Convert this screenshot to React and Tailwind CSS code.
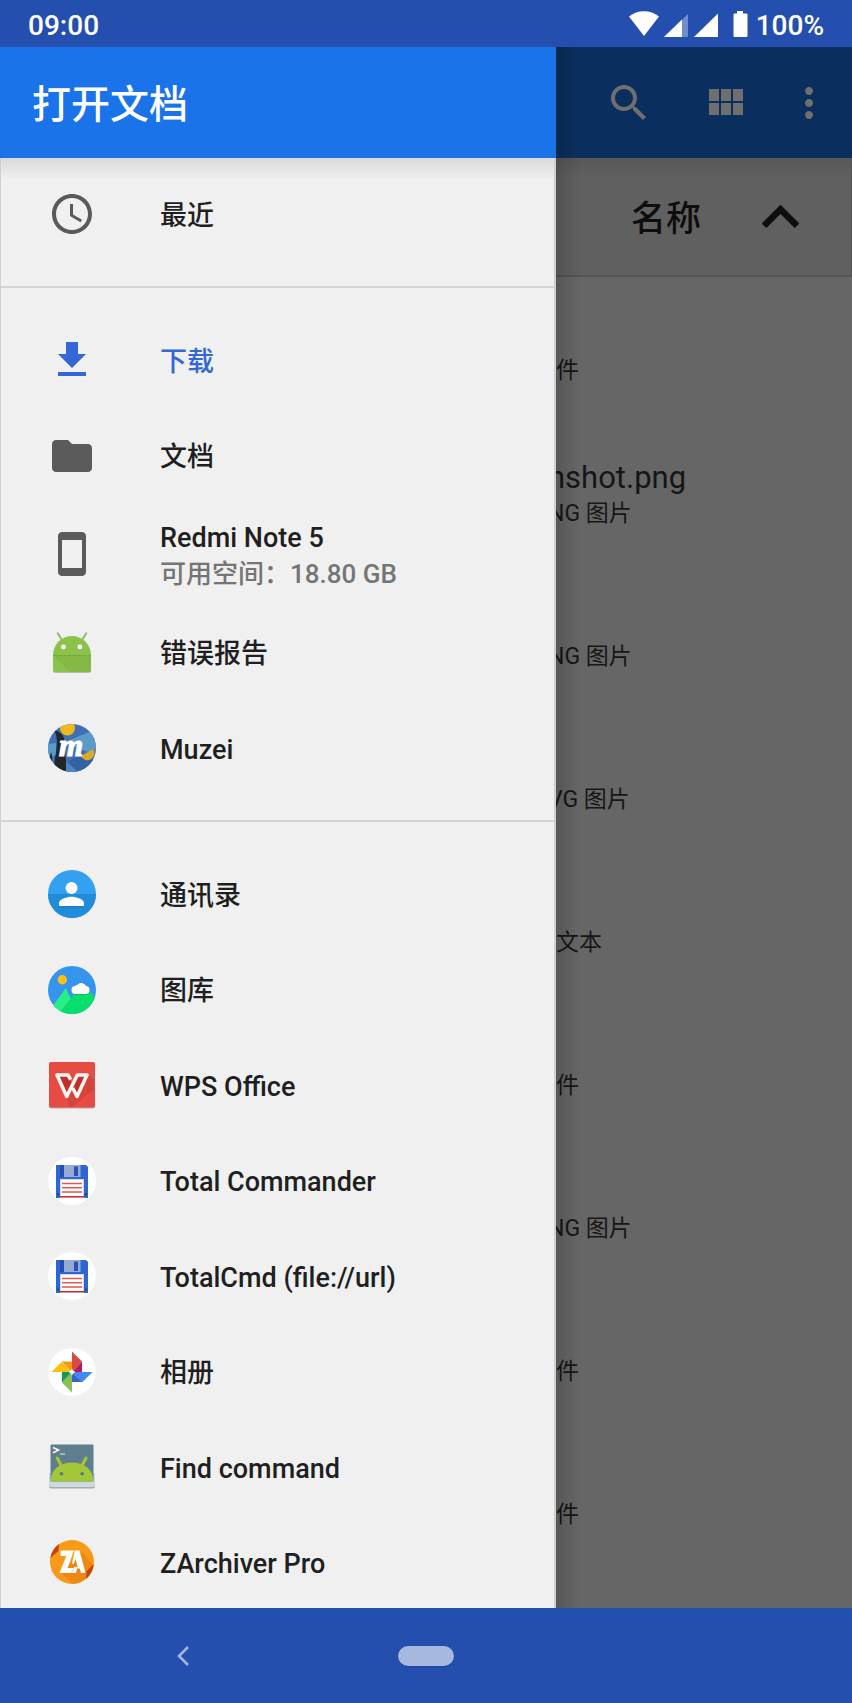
const FONT = "font-[Roboto,'Noto_Sans_CJK_SC',sans-serif]";

function Glyph({ d }) {
  return (
    <svg viewBox="0 0 24 24" className="size-12 shrink-0" fill="currentColor" aria-hidden="true">
      <path d={d} />
    </svg>
  );
}

function Art({ children }) {
  return (
    <svg viewBox="0 0 48 48" className="size-12 shrink-0" aria-hidden="true">
      {children}
    </svg>
  );
}

const SEARCH =
  "M15.5 14h-.79l-.28-.27A6.471 6.471 0 0 0 16 9.5 6.5 6.5 0 1 0 9.5 16c1.61 0 3.09-.59 4.23-1.57l.27.28v.79l5 4.99L20.49 19l-4.99-5zm-6 0C7.01 14 5 11.99 5 9.5S7.01 5 9.5 5 14 7.01 14 9.5 11.99 14 9.5 14z";
const MODULES =
  "M4 11h5V5H4v6zm0 7h5v-6H4v6zm6 0h5v-6h-5v6zm6 0h5v-6h-5v6zm-6-7h5V5h-5v6zm6-6v6h5V5h-5z";
const MORE =
  "M12 8c1.1 0 2-.9 2-2s-.9-2-2-2-2 .9-2 2 .9 2 2 2zm0 2c-1.1 0-2 .9-2 2s.9 2 2 2 2-.9 2-2-.9-2-2-2zm0 6c-1.1 0-2 .9-2 2s.9 2 2 2 2-.9 2-2-.9-2-2-2z";
const CLOCK =
  "M11.99 2C6.47 2 2 6.48 2 12s4.47 10 9.99 10C17.52 22 22 17.52 22 12S17.52 2 11.99 2zM12 20c-4.42 0-8-3.58-8-8s3.58-8 8-8 8 3.58 8 8-3.58 8-8 8zm.5-13H11v6l5.25 3.15.75-1.23-4.5-2.67z";
const DOWNLOAD = "M19 9h-4V3H9v6H5l7 7 7-7zM5 18v2h14v-2H5z";
const FOLDER = "M10 4H4c-1.1 0-1.99.9-1.99 2L2 18c0 1.1.9 2 2 2h16c1.1 0 2-.9 2-2V8c0-1.1-.9-2-2-2h-8l-2-2z";
const PHONE =
  "M17 1.01L7 1c-1.1 0-2 .9-2 2v18c0 1.1.9 2 2 2h10c1.1 0 2-.9 2-2V3c0-1.1-.9-1.99-2-1.99zM17 19H7V5h10v14z";

function BugIcon() {
  return (
    <Art>
      <path d="M9.7 4.3l4.2 6.6M38.3 4.3l-4.2 6.6" stroke="#8bb85a" strokeWidth="1.8" strokeLinecap="round" />
      <path d="M5 42a2 2 0 0 0 2 2h34a2 2 0 0 0 2-2v-3H5z" fill="#b9bdb4" />
      <path d="M5 26a19 19 0 0 1 38 0v15a2 2 0 0 1-2 2H7a2 2 0 0 1-2-2z" fill="#8bc34a" />
      <path d="M5 26h38v15a2 2 0 0 1-2 2H22z" fill="#83b845" />
      <path d="M5 26h38v1H5z" fill="#78aa3f" />
      <circle cx="15.5" cy="18" r="2.4" fill="#fff" />
      <circle cx="31.9" cy="18" r="2.4" fill="#fff" />
    </Art>
  );
}

function MuzeiIcon() {
  return (
    <Art>
      <clipPath id="muzei-disc">
        <circle cx="24" cy="24" r="24" />
      </clipPath>
      <g clipPath="url(#muzei-disc)">
        <path d="M0 0h48v48H0z" fill="#3f70b5" />
        <path d="M0 20l8-1v12L0 34zM22 16L48 5v20l-8 3-14-5z" fill="#5a9bc9" />
        <path d="M17 40l12-8 19 4v12H17z" fill="#3461a2" />
        <path d="M18 37l12 11H18z" fill="#4d86c6" />
        <circle cx="19.500" cy="4" r="7.500" fill="#f0b81c" />
        <path d="M33 32l12-7a7 7 0 1 1-12 7z" fill="#d9ab22" />
        <path d="M6 6c4 6 3 16 2 22-1 7-2 9-2 20h12V37c-1-8-1-16-2-23C14 9 10 7 6 6zM3 28c2 4 0 9 1 14l-4-2z" fill="#20282c" />
      </g>
      <text x="11" y="32" fill="#fff" stroke="#fff" strokeWidth="1.200" fontSize="31" fontWeight="700" fontStyle="italic" fontFamily="Liberation Serif, serif">
        m
      </text>
    </Art>
  );
}

function ContactsIcon() {
  return (
    <Art>
      <circle cx="24" cy="24" r="24" fill="#34a0f2" />
      <path d="M0 24h48a24 24 0 0 1-48 0z" fill="#218cda" />
      <path d="M11 36.500h25v1H11z" fill="#1b78bd" />
      <circle cx="23.500" cy="18" r="6" fill="#fff" />
      <path d="M11 36v-3c0-4 8-6.300 12.500-6.300S36 29 36 33v3z" fill="#fff" />
    </Art>
  );
}

function GalleryIcon() {
  return (
    <Art>
      <clipPath id="gallery-disc">
        <circle cx="24" cy="24" r="24" />
      </clipPath>
      <g clipPath="url(#gallery-disc)">
        <path d="M0 0h48v48H0z" fill="#3594ec" />
        <circle cx="14.300" cy="13.700" r="4.700" fill="#fcc016" />
        <path d="M2 44l15.700-22L30 48H2z" fill="#28ef85" />
        <path d="M13 45l13-17 15-4 9 12v12H13z" fill="#08de6b" />
        <path d="M27 27.800h13v1H27z" fill="#0bb65d" />
        <path d="M28 28a4 4 0 0 1-1-8 4 4 0 0 1 3-1.500 5 5 0 0 1 8 1.500 4 4 0 0 1-1 8z" fill="#fff" />
      </g>
    </Art>
  );
}

function WpsIcon() {
  return (
    <Art>
      <rect x="1" y="1.500" width="46" height="46" rx="2" fill="#b9aaa8" />
      <rect x="1" y="1" width="46" height="45.500" rx="2" fill="#e64c41" />
      <path d="M40 13l6 6v9L31 40l-7 6h-2l-5-11z" fill="#d3443a" />
      <path d="M11 15h9l4 8-5 10zM29 15l-5 9 5 10 9-19z" fill="#bf3128" />
      <path
        d="M22.700 18.700L20 14H9l9.700 21.500L29.300 14H39L29 35.500l-4.300-8.500"
        fill="none"
        stroke="#fbf3f2"
        strokeWidth="3.600"
        strokeLinejoin="round"
      />
    </Art>
  );
}

function FloppyIcon() {
  return (
    <Art>
      <circle cx="24" cy="24" r="24" fill="#fff" />
      <path d="M8 8h30l2 2v31H8z" fill="#2f66cf" />
      <path d="M12 8h4v12h-4z" fill="#234fb4" />
      <path d="M16 8h16.500v12H16z" fill="#97aad4" />
      <path d="M26 9.500h4V19h-4z" fill="#2853b6" />
      <path d="M12 22h24v19H12z" fill="#cdd7ef" />
      <path d="M13 23h22v17H13z" fill="#fff" />
      <path d="M14 26.500h20M14 30.700h20M14 35h20" stroke="#e2574c" strokeWidth="1.400" />
      <path d="M12 39.700h24" stroke="#ea1c1c" strokeWidth="1.400" />
      <path d="M9 36.500h2v2H9zM37 36.500h2v2h-2z" fill="#1b3f94" />
    </Art>
  );
}

function PinwheelIcon() {
  return (
    <Art>
      <circle cx="24" cy="24" r="24" fill="#fff" />
      <path d="M24 3.500l10 10L24 24z" fill="#db4a3f" />
      <path d="M34 13.500V24H24z" fill="#b01f5c" />
      <path d="M44.500 24l-10 10L24 24z" fill="#4387f2" />
      <path d="M34.500 34H24V24z" fill="#3566d2" />
      <path d="M24 44.500l-10-10L24 24z" fill="#8bc152" />
      <path d="M14 34.500V24h10z" fill="#139b5b" />
      <path d="M3.500 24l10-10L24 24z" fill="#fdc012" />
      <path d="M13.500 13.500H24V24z" fill="#f69914" />
      <path d="M24 20.500l1.200 2.300L27.500 24l-2.300 1.200L24 27.500l-1.200-2.300L20.500 24l2.300-1.200z" fill="#fff" />
    </Art>
  );
}

function TerminalIcon() {
  return (
    <Art>
      <rect x="1" y="30" width="46" height="15.500" rx="2" fill="#9fb0b5" />
      <rect x="1" y="30" width="46" height="14" rx="2" fill="#cfd8dc" />
      <rect x="2.500" y="1.500" width="43" height="37" rx="1" fill="#5f7f8e" />
      <path d="M9.200 15l4 7.500M38 15l-4 7.500" stroke="#a4c639" strokeWidth="3" strokeLinecap="round" />
      <path d="M3 38.500V36a21 16.500 0 0 1 42 0v2.500z" fill="#a4c639" />
      <circle cx="13.500" cy="30.700" r="1.800" fill="#54788a" />
      <circle cx="34.200" cy="30.700" r="1.800" fill="#54788a" />
      <path d="M5 4.500l5.500 2.600L5 9.700" fill="none" stroke="#fff" strokeWidth="1.500" />
      <path d="M12 11h5" stroke="#b4c8d1" strokeWidth="1.500" />
    </Art>
  );
}

function ArchiverIcon() {
  return (
    <Art>
      <circle cx="24" cy="23" r="22" fill="#f89a17" />
      <path d="M34 13l11 13a22 22 0 0 1-20 19L13 34z" fill="#ee8713" />
      <path d="M2.300 19A22 22 0 0 1 11 5l-.5 7zM45.800 25A22 22 0 0 1 38 40l.5-8z" fill="#c8440b" />
      <path d="M12.500 11.500H26L19.500 29h6l-2.300 5H11.500l6.800-17h-5.800z" fill="#fff" />
      <path d="M26.800 11.500h4.700L37.500 34H33l-1.200-4.500H29l-1 4.500h-4.300l2.500-6h3.500l-2.200-8-1.800 5-1.700-.5z" fill="#fff" />
    </Art>
  );
}

const GROUPS = [
  [{ name: "最近", icon: <Glyph d={CLOCK} /> }],
  [
    { name: "下载", icon: <Glyph d={DOWNLOAD} />, active: true },
    { name: "文档", icon: <Glyph d={FOLDER} /> },
    { name: "Redmi Note 5", icon: <Glyph d={PHONE} />, detail: "可用空间：18.80 GB" },
    { name: "错误报告", icon: <BugIcon /> },
    { name: "Muzei", icon: <MuzeiIcon /> },
  ],
  [
    { name: "通讯录", icon: <ContactsIcon /> },
    { name: "图库", icon: <GalleryIcon /> },
    { name: "WPS Office", icon: <WpsIcon /> },
    { name: "Total Commander", icon: <FloppyIcon /> },
    { name: "TotalCmd (file://url)", icon: <FloppyIcon /> },
    { name: "相册", icon: <PinwheelIcon /> },
    { name: "Find command", icon: <TerminalIcon /> },
    { name: "ZArchiver Pro", icon: <ArchiverIcon /> },
  ],
];

const FILES = [
  { kind: "件", inset: "pl-[556px]" },
  { title: "nshot.png", kind: "NG 图片", inset: "pl-[548px]" },
  { kind: "NG 图片", inset: "pl-[548px]" },
  { kind: "VG 图片", inset: "pl-[548px]" },
  { kind: "文本", inset: "pl-[556px]" },
  { kind: "件", inset: "pl-[556px]" },
  { kind: "NG 图片", inset: "pl-[548px]" },
  { kind: "件", inset: "pl-[556px]" },
  { kind: "件", inset: "pl-[556px]" },
];

function StatusBar() {
  return (
    <div className="flex h-[47px] shrink-0 items-center justify-between bg-[#244fae] px-7 text-[28px] font-medium text-white">
      <span className="pt-1">09:00</span>
      <div className="flex items-center">
        <svg viewBox="0 0 119 26" className="h-[26px] w-[119px]" aria-hidden="true">
          <path d="M0 5.500a24 24 0 0 1 30 0L15 25z" fill="#fff" />
          <path d="M59 3v23H35z" fill="#6f8ccb" />
          <path d="M53 8.500V26H35z" fill="#fff" />
          <path d="M89 2.500V26H65z" fill="#fff" />
          <path d="M108 0h6v2.500h3.500a1 1 0 0 1 1 1V25a1 1 0 0 1-1 1h-12a1 1 0 0 1-1-1V3.500a1 1 0 0 1 1-1h2.500z" fill="#fff" />
        </svg>
        <span className="ml-2 pt-1">100%</span>
      </div>
    </div>
  );
}

function FileBrowser() {
  return (
    <div>
      <header className="flex h-[111px] items-center justify-end bg-[#0a2f5e] pr-[19px] text-[#6f6f6f]">
        <button type="button" aria-label="搜索">
          <Glyph d={SEARCH} />
        </button>
        <button type="button" aria-label="网格视图" className="ml-12">
          <Glyph d={MODULES} />
        </button>
        <button type="button" aria-label="更多选项" className="ml-9">
          <Glyph d={MORE} />
        </button>
      </header>
      <div className="flex h-[119px] items-center justify-end border-r border-b-2 border-[#545454] bg-[linear-gradient(#585858,#606060_20px)] pr-[52px] text-[#0e0e0e]">
        <button type="button" className="flex items-center gap-[61px] text-[35px] font-medium">
          <span className="pt-2">名称</span>
          <svg viewBox="0 0 37 23" className="h-[23px] w-[37px]" fill="currentColor" aria-hidden="true">
            <path d="M18.500 0L37 18.500l-4.300 4.300L18.500 8.700 4.300 22.800 0 18.500z" stroke="currentColor" strokeWidth=".6" />
          </svg>
        </button>
      </div>
      <ul className="pt-[5px] text-[#161616]">
        {FILES.map((file, i) => (
          <li key={i} className={`flex h-[143px] flex-col justify-end pb-9 whitespace-nowrap ${file.inset}`}>
            {file.title && <span className="text-[31px] leading-9">{file.title}</span>}
            <span className="text-[23px] leading-9">{file.kind}</span>
          </li>
        ))}
      </ul>
    </div>
  );
}

function RootItem({ item }) {
  return (
    <li className={item.detail ? "h-[102px]" : "h-24 even:h-[95px]"}>
      <a href="#" className={`flex h-full items-center gap-16 px-[47px] ${item.active ? "text-[#3367d6]" : "text-[#5a5a5a]"}`}>
        {item.icon}
        <span className="flex flex-col pt-[3px] font-medium">
          <span className={`text-[27px] leading-9 ${item.active ? "" : "text-[#1f1f1f]"}`}>{item.name}</span>
          {item.detail && <span className="text-[26px] leading-9 text-[#757575]">{item.detail}</span>}
        </span>
      </a>
    </li>
  );
}

function Drawer() {
  return (
    <aside className="absolute inset-y-0 left-0 flex w-[556px] flex-col overflow-hidden bg-[#f0f0f0]">
      <header className="flex h-[111px] shrink-0 items-center bg-[#1a73e8] px-8 pt-[5px]">
        <h1 className="text-[39px] font-medium text-white">打开文档</h1>
      </header>
      <nav className="flex-1 border-r-2 border-l border-[#d0d0d0] bg-[linear-gradient(#dadada,#f0f0f0_22px)] pt-2">
        {GROUPS.map((group, i) => (
          <ul key={i} className={i === 0 ? "pb-6" : "border-t-2 border-[#d4d4d4] py-6"}>
            {group.map((item) => (
              <RootItem key={item.name} item={item} />
            ))}
          </ul>
        ))}
      </nav>
    </aside>
  );
}

export default function App() {
  return (
    <div className={`flex min-h-screen flex-col bg-[#666666] ${FONT}`}>
      <StatusBar />
      <main className="relative flex-1 overflow-hidden">
        <FileBrowser />
        <div className="absolute inset-y-0 left-[556px] w-6 bg-linear-to-r from-black/15 to-transparent" />
        <Drawer />
      </main>
      <footer className="grid h-[95px] shrink-0 grid-cols-7 items-center bg-[#244fae]">
        <button type="button" aria-label="返回" className="col-start-2 flex justify-center">
          <svg viewBox="0 0 12 20" className="h-5 w-3" fill="none" stroke="#a7b8e0" strokeWidth="2.500" aria-hidden="true">
            <path d="M11 1l-9 9 9 9" />
          </svg>
        </button>
        <button type="button" aria-label="主屏幕" className="col-start-4 flex justify-center">
          <span className="h-5 w-14 rounded-full bg-[#a7b8e0] shadow" />
        </button>
      </footer>
    </div>
  );
}
